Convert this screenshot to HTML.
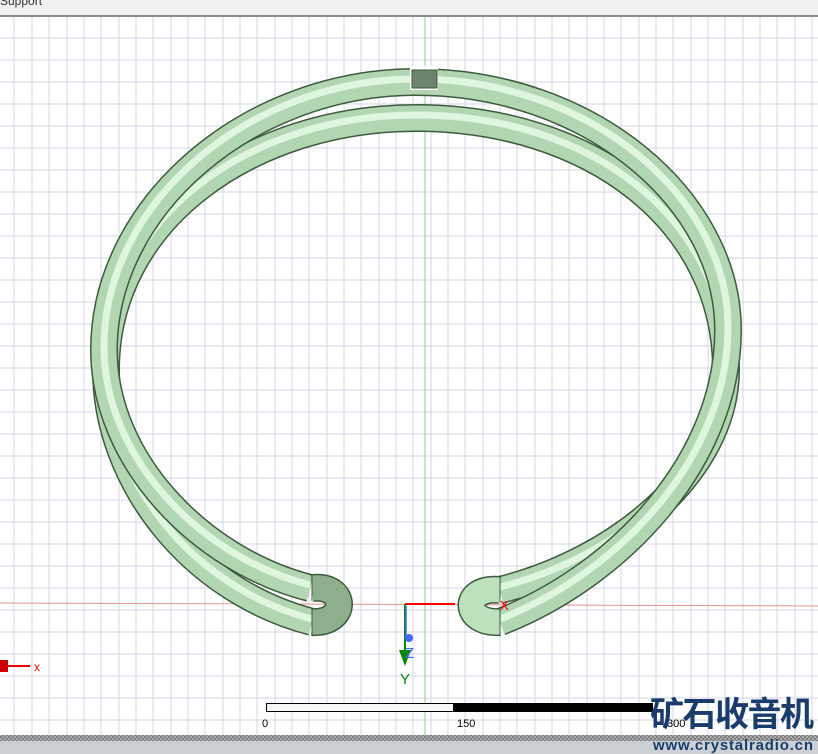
<!DOCTYPE html>
<html><head><meta charset="utf-8"><style>
html,body{margin:0;padding:0;width:818px;height:754px;overflow:hidden;background:#fff;font-family:"Liberation Sans",sans-serif}
</style></head><body>
<svg width="818" height="754" viewBox="0 0 818 754" xmlns="http://www.w3.org/2000/svg" style="position:absolute;left:0;top:0">
<defs>
<pattern id="chk" width="4" height="4" patternUnits="userSpaceOnUse"><rect width="4" height="4" fill="#a8aaac"/><rect width="2" height="2" fill="#7c7e80"/><rect x="2" y="2" width="2" height="2" fill="#7c7e80"/></pattern>
</defs>
<rect x="0" y="0" width="818" height="15" fill="#f0f0f0"/>
<text x="0" y="5" font-size="12" fill="#333">Support</text>
<rect x="0" y="15" width="818" height="2" fill="#8a8a8a"/>
<g stroke="#d6d4e8" stroke-width="1">
<path d="M14 17V735M32 17V735M49 17V735M67 17V735M84 17V735M101 17V735M119 17V735M136 17V735M153 17V735M171 17V735M188 17V735M205 17V735M223 17V735M240 17V735M257 17V735M275 17V735M292 17V735M309 17V735M327 17V735M344 17V735M361 17V735M379 17V735M396 17V735M413 17V735M431 17V735M448 17V735M465 17V735M483 17V735M500 17V735M517 17V735M535 17V735M552 17V735M569 17V735M587 17V735M604 17V735M621 17V735M639 17V735M656 17V735M673 17V735M691 17V735M708 17V735M725 17V735M743 17V735M760 17V735M777 17V735M795 17V735M812 17V735"/>
<path d="M0 38H818M0 60H818M0 82H818M0 104H818M0 126H818M0 148H818M0 170H818M0 192H818M0 214H818M0 236H818M0 258H818M0 280H818M0 302H818M0 324H818M0 346H818M0 368H818M0 390H818M0 412H818M0 434H818M0 456H818M0 478H818M0 500H818M0 522H818M0 544H818M0 566H818M0 588H818M0 610H818M0 632H818M0 654H818M0 676H818M0 698H818M0 720H818"/>
</g>
<line x1="425" y1="17" x2="425" y2="735" stroke="#8cc88c" stroke-width="1"/>
<line x1="0" y1="603" x2="818" y2="606" stroke="#e89090" stroke-width="1"/>
<g fill="none">
<path id="p2" d="M312 622 C190 590 106 480 106 370 C106 220 250 118 416 118 C590 118 726 220 726 370 C726 470 620 560 500 590"/>
<path id="p1" d="M310 588 C200 560 104 460 104 350 C104 205 250 82 416 82 C590 82 728 200 728 330 C728 460 620 575 500 622"/>
<use href="#p2" stroke="#3e5a3e" stroke-width="28"/>
<use href="#p2" stroke="#b2d6b2" stroke-width="25"/>
<use href="#p2" stroke="#def6de" stroke-width="7" transform="translate(0,-3)"/>
<use href="#p1" stroke="#3e5a3e" stroke-width="28"/>
<use href="#p1" stroke="#b2d6b2" stroke-width="25"/>
<use href="#p1" stroke="#def6de" stroke-width="7" transform="translate(0,-3)"/>
<path d="M312 588 C348 584 348 624 312 622" stroke="#3e5a3e" stroke-width="28"/>
<path d="M312 588 C348 584 348 624 312 622" stroke="#8eae8e" stroke-width="25"/>
<path d="M500 590 C462 586 462 624 500 622" stroke="#3e5a3e" stroke-width="28"/>
<path d="M500 590 C462 586 462 624 500 622" stroke="#bde0bd" stroke-width="25"/>
</g>
<line x1="312" y1="574" x2="312" y2="601" stroke="#3e5a3e"/>
<line x1="312" y1="608" x2="312" y2="636" stroke="#3e5a3e"/>
<line x1="500" y1="576" x2="500" y2="603" stroke="#3e5a3e"/>
<line x1="500" y1="608" x2="500" y2="636" stroke="#3e5a3e"/>
<rect x="410" y="66" width="28" height="24" fill="#fff"/>
<rect x="412" y="70" width="25" height="18" fill="#6c846c" stroke="#3e5a3e"/>
<line x1="405" y1="604" x2="455" y2="604" stroke="#ff0000" stroke-width="2"/>
<line x1="405" y1="604" x2="405" y2="660" stroke="#008800" stroke-width="2"/>
<polygon points="399,650 411,650 405,666" fill="#008800"/>
<line x1="406" y1="606" x2="406" y2="636" stroke="#4466ff" stroke-width="1.5"/>
<circle cx="409" cy="638" r="4" fill="#4466ff"/>
<text x="405" y="658" font-size="15" fill="#4466ff">Z</text>
<text x="400" y="684" font-size="15" fill="#008800">Y</text>
<text x="500" y="610" font-size="13" fill="#ff0000">X</text>
<rect x="0" y="660" width="8" height="12" fill="#c00"/>
<line x1="8" y1="666" x2="30" y2="666" stroke="#e00" stroke-width="2"/>
<text x="34" y="671" font-size="12" fill="#e00">x</text>
<rect x="266.5" y="703.5" width="187" height="8" fill="#f6f6f6" stroke="#000"/>
<rect x="453" y="703" width="200" height="9" fill="#000"/>
<text x="262" y="727" font-size="11" fill="#000">0</text>
<text x="457" y="727" font-size="11" fill="#000">150</text>
<text x="667" y="727" font-size="11" fill="#000">300</text>
<rect x="0" y="735" width="818" height="6" fill="url(#chk)"/>
<rect x="0" y="741" width="818" height="13" fill="#ccd0d4"/>
<text x="650" y="726" font-size="34" font-weight="bold" fill="#1a3c6c" font-family="'Noto Sans CJK SC',sans-serif" textLength="164">矿石收音机</text>
<text x="653" y="750" font-size="15" font-weight="bold" fill="#1a3c6c" textLength="160">www.crystalradio.cn</text>
</svg>
</body></html>
